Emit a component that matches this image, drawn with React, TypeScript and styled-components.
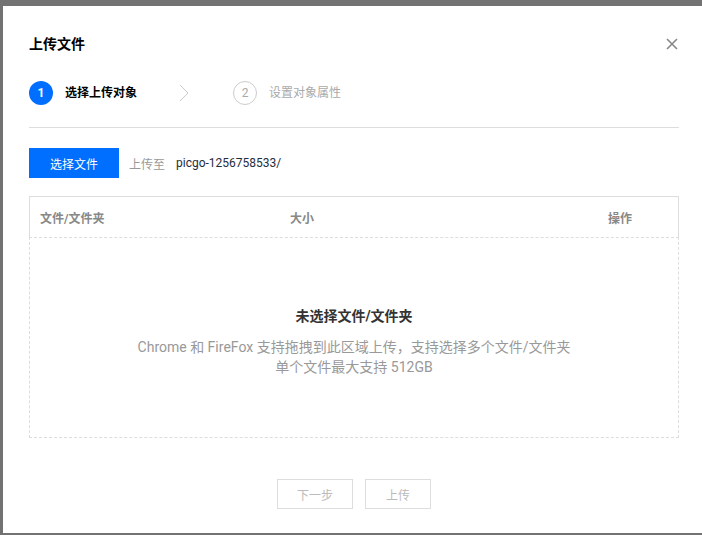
import React from "react";
import styled, { createGlobalStyle } from "styled-components";

const Global = createGlobalStyle`
  html, body { margin: 0; padding: 0; }
  body {
    background: #727272;
    font-family: Roboto, "Noto Sans CJK SC", "Noto Sans", sans-serif;
    font-size: 12px;
    color: #333;
    overflow: hidden;
  }
`;

const Page = styled.div`
  width: 702px;
  height: 535px;
  box-sizing: border-box;
  padding: 6px 0 2px 3px;
  display: flex;
`;

const Dialog = styled.div`
  flex: 1;
  background: #fff;
  box-sizing: border-box;
  padding: 28px 23px 0 26px;
  display: flex;
  flex-direction: column;
`;

const Header = styled.div`
  display: flex;
  align-items: center;
  justify-content: space-between;
  height: 20px;
`;

const Title = styled.h2`
  margin: 0;
  font-size: 14px;
  font-weight: 700;
  line-height: 20px;
  color: #000;
`;

const CloseButton = styled.button`
  border: 0;
  padding: 0;
  background: transparent;
  width: 14px;
  height: 14px;
  display: flex;
  align-items: center;
  justify-content: center;
  cursor: pointer;
`;

const Steps = styled.div`
  display: flex;
  align-items: center;
  gap: 42px;
  margin-top: 27px;
  padding-bottom: 22px;
  border-bottom: 1px solid #ddd;
`;

const Step = styled.div`
  display: flex;
  align-items: center;
  gap: 12px;
`;

const Chevron = styled.svg`
  margin-right: 2px;
`;

const StepNum = styled.span<{ $active?: boolean }>`
  width: 24px;
  height: 24px;
  box-sizing: border-box;
  border-radius: 50%;
  display: flex;
  align-items: center;
  justify-content: center;
  font-size: 12px;
  font-weight: ${(p) => (p.$active ? 700 : 400)};
  background: ${(p) => (p.$active ? "#006eff" : "#fff")};
  color: ${(p) => (p.$active ? "#fff" : "#aaa")};
  border: ${(p) => (p.$active ? "none" : "1px solid #ccc")};
`;

const StepLabel = styled.span<{ $active?: boolean }>`
  font-size: 12px;
  line-height: 20px;
  font-weight: ${(p) => (p.$active ? 700 : 400)};
  color: ${(p) => (p.$active ? "#000" : "#aaa")};
`;

const Toolbar = styled.div`
  display: flex;
  align-items: center;
  margin-top: 20px;
`;

const PrimaryButton = styled.button`
  width: 90px;
  height: 30px;
  border: 0;
  background: #006eff;
  color: #fff;
  font-family: inherit;
  font-size: 12px;
  cursor: pointer;
  margin-right: 10px;
`;

const PathLabel = styled.span`
  color: #999;
  font-size: 12px;
  margin-right: 11px;
`;

const PathValue = styled.span`
  color: #1f2d3d;
  font-size: 12px;
`;

const Table = styled.div`
  margin-top: 18px;
  display: flex;
  flex-direction: column;
`;

const TableHead = styled.div`
  display: grid;
  grid-template-columns: 250px 1fr 80px;
  height: 40px;
  align-items: center;
  border: 1px solid #ddd;
  border-bottom: 0;
`;

const HeadCell = styled.div`
  padding-left: 10px;
  font-size: 12px;
  font-weight: 700;
  color: #888;
`;

const DropZone = styled.div`
  height: 201px;
  box-sizing: border-box;
  border: 1px dashed #ddd;
  display: flex;
  flex-direction: column;
  align-items: center;
  padding-top: 68px;
`;

const EmptyTitle = styled.div`
  font-size: 14px;
  font-weight: 700;
  color: #333;
  line-height: 20px;
  margin-bottom: 11px;
`;

const EmptyDesc = styled.div`
  font-size: 14px;
  color: #999;
  line-height: 20px;
  text-align: center;
`;

const Footer = styled.div`
  display: flex;
  justify-content: center;
  gap: 12px;
  margin-top: 41px;
`;

const GhostButton = styled.button<{ $w: number }>`
  width: ${(p) => p.$w}px;
  height: 30px;
  box-sizing: border-box;
  background: #fff;
  border: 1px solid #ddd;
  color: #bbb;
  font-family: inherit;
  font-size: 12px;
  cursor: not-allowed;
`;

export default function App() {
  return (
    <>
      <Global />
      <Page>
        <Dialog>
          <Header>
            <Title>上传文件</Title>
            <CloseButton aria-label="close">
              <svg width="12" height="12" viewBox="0 0 12 12">
                <path d="M1 1L11 11M11 1L1 11" stroke="#888" strokeWidth="1.6" />
              </svg>
            </CloseButton>
          </Header>
          <Steps>
            <Step>
              <StepNum $active>1</StepNum>
              <StepLabel $active>选择上传对象</StepLabel>
            </Step>
            <Chevron width="10" height="18" viewBox="0 0 10 18">
              <path d="M1 1L9 9L1 17" fill="none" stroke="#ccc" strokeWidth="1" />
            </Chevron>
            <Step>
              <StepNum>2</StepNum>
              <StepLabel>设置对象属性</StepLabel>
            </Step>
          </Steps>
          <Toolbar>
            <PrimaryButton>选择文件</PrimaryButton>
            <PathLabel>上传至</PathLabel>
            <PathValue>picgo-1256758533/</PathValue>
          </Toolbar>
          <Table>
            <TableHead>
              <HeadCell>文件/文件夹</HeadCell>
              <HeadCell>大小</HeadCell>
              <HeadCell>操作</HeadCell>
            </TableHead>
            <DropZone>
              <EmptyTitle>未选择文件/文件夹</EmptyTitle>
              <EmptyDesc>
                Chrome 和 FireFox 支持拖拽到此区域上传，支持选择多个文件/文件夹
                <br />
                单个文件最大支持 512GB
              </EmptyDesc>
            </DropZone>
          </Table>
          <Footer>
            <GhostButton $w={76} disabled>下一步</GhostButton>
            <GhostButton $w={66} disabled>上传</GhostButton>
          </Footer>
        </Dialog>
      </Page>
    </>
  );
}
